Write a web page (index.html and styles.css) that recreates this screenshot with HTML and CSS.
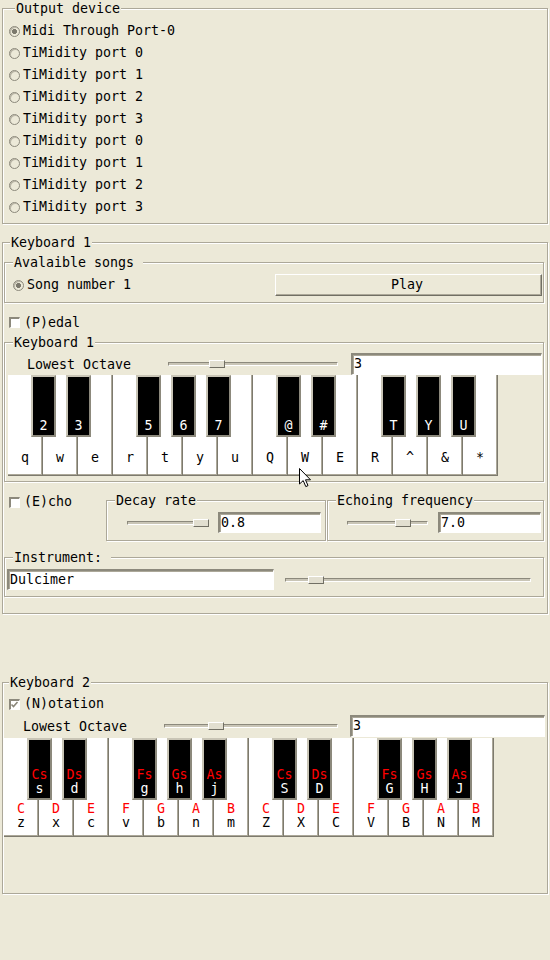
FILE: index.html
```html
<!DOCTYPE html>
<html>
<head>
<meta charset="utf-8">
<title>Keyboard</title>
<link rel="stylesheet" href="styles.css">
</head>
<body>
<fieldset class="lf lf-outer out">
  <legend>Output device</legend>
  <div class="radios">
    <div class="radio on"><span class="rb"></span>Midi Through Port-0</div>
    <div class="radio"><span class="rb"></span>TiMidity port 0</div>
    <div class="radio"><span class="rb"></span>TiMidity port 1</div>
    <div class="radio"><span class="rb"></span>TiMidity port 2</div>
    <div class="radio"><span class="rb"></span>TiMidity port 3</div>
    <div class="radio"><span class="rb"></span>TiMidity port 0</div>
    <div class="radio"><span class="rb"></span>TiMidity port 1</div>
    <div class="radio"><span class="rb"></span>TiMidity port 2</div>
    <div class="radio"><span class="rb"></span>TiMidity port 3</div>
  </div>
</fieldset>

<fieldset class="lf lf-outer kb1">
  <legend>Keyboard 1</legend>
  <fieldset class="lf lf-inner songs">
    <legend>Avalaible songs&nbsp;</legend>
    <div class="songs-row">
      <div class="radio on"><span class="rb"></span>Song number 1</div>
      <div class="btn">Play</div>
    </div>
  </fieldset>

  <div class="check pedal"><span class="cb"></span>(P)edal</div>

  <fieldset class="lf lf-inner kbin">
    <legend>Keyboard 1</legend>
    <div class="oct-row oct1">
      <span class="oct-label">Lowest Octave</span>
      <div class="scale"><span class="handle" style="left:40px"></span></div>
      <div class="entry">3</div>
    </div>
    <div class="piano p1">
      <div class="wk"><span>q</span><div class="bk"><span>2</span></div></div>
      <div class="wk"><span>w</span><div class="bk"><span>3</span></div></div>
      <div class="wk"><span>e</span></div>
      <div class="wk"><span>r</span><div class="bk"><span>5</span></div></div>
      <div class="wk"><span>t</span><div class="bk"><span>6</span></div></div>
      <div class="wk"><span>y</span><div class="bk"><span>7</span></div></div>
      <div class="wk"><span>u</span></div>
      <div class="wk"><span>Q</span><div class="bk"><span>@</span></div></div>
      <div class="wk"><span>W</span><div class="bk"><span>#</span></div></div>
      <div class="wk"><span>E</span></div>
      <div class="wk"><span>R</span><div class="bk"><span>T</span></div></div>
      <div class="wk"><span>^</span><div class="bk"><span>Y</span></div></div>
      <div class="wk"><span>&amp;</span><div class="bk"><span>U</span></div></div>
      <div class="wk"><span>*</span></div>
    </div>
  </fieldset>

  <div class="echo-row">
    <div class="check echo"><span class="cb"></span>(E)cho</div>
    <fieldset class="lf lf-inner decay">
      <legend>Decay rate</legend>
      <div class="val-row">
        <div class="scale"><span class="handle" style="left:65px"></span></div>
        <div class="entry">0.8</div>
      </div>
    </fieldset>
    <fieldset class="lf lf-inner freq">
      <legend>Echoing frequency</legend>
      <div class="val-row">
        <div class="scale"><span class="handle" style="left:47px"></span></div>
        <div class="entry">7.0</div>
      </div>
    </fieldset>
  </div>

  <fieldset class="lf lf-inner instr">
    <legend>Instrument:&nbsp;</legend>
    <div class="instr-row">
      <div class="entry">Dulcimer</div>
      <div class="scale"><span class="handle" style="left:22px"></span></div>
    </div>
  </fieldset>
</fieldset>

<fieldset class="lf lf-outer kb2">
  <legend>Keyboard 2</legend>
  <div class="check notation on"><span class="cb"><svg width="9" height="9" viewBox="0 0 9 9"><path d="M1.5 4.5 L3.5 6.5 L7.5 2" fill="none" stroke="#8a877a" stroke-width="1.6"/></svg></span>(N)otation</div>
  <div class="oct-row oct2">
    <span class="oct-label">Lowest Octave</span>
    <div class="scale"><span class="handle" style="left:43px"></span></div>
    <div class="entry">3</div>
  </div>
  <div class="piano p2">
    <div class="wk"><b>C</b><span>z</span><div class="bk"><b>Cs</b><span>s</span></div></div>
    <div class="wk"><b>D</b><span>x</span><div class="bk"><b>Ds</b><span>d</span></div></div>
    <div class="wk"><b>E</b><span>c</span></div>
    <div class="wk"><b>F</b><span>v</span><div class="bk"><b>Fs</b><span>g</span></div></div>
    <div class="wk"><b>G</b><span>b</span><div class="bk"><b>Gs</b><span>h</span></div></div>
    <div class="wk"><b>A</b><span>n</span><div class="bk"><b>As</b><span>j</span></div></div>
    <div class="wk"><b>B</b><span>m</span></div>
    <div class="wk"><b>C</b><span>Z</span><div class="bk"><b>Cs</b><span>S</span></div></div>
    <div class="wk"><b>D</b><span>X</span><div class="bk"><b>Ds</b><span>D</span></div></div>
    <div class="wk"><b>E</b><span>C</span></div>
    <div class="wk"><b>F</b><span>V</span><div class="bk"><b>Fs</b><span>G</span></div></div>
    <div class="wk"><b>G</b><span>B</span><div class="bk"><b>Gs</b><span>H</span></div></div>
    <div class="wk"><b>A</b><span>N</span><div class="bk"><b>As</b><span>J</span></div></div>
    <div class="wk"><b>B</b><span>M</span></div>
  </div>
</fieldset>

<svg class="cursor" width="13" height="20" viewBox="0 0 13 20"><path d="M0.5 0.5 L0.5 16 L4.2 12.6 L6.8 18.6 L9 17.6 L6.5 11.8 L11.5 11.8 Z" fill="#fff" stroke="#000" stroke-width="1" stroke-linejoin="round"/></svg>
</body>
</html>
```

FILE: styles.css
```css
* { box-sizing: border-box; }
html, body { margin: 0; padding: 0; }
body {
  position: relative;
  width: 550px;
  height: 960px;
  overflow: hidden;
  padding: 0 2px;
  background: #ece9d8;
  color: #000;
  font-family: "DejaVu Sans Mono", "Liberation Mono", monospace;
  font-size: 13.3px;
  line-height: 16px;
}

/* label frames */
.lf {
  margin: 0;
  padding: 0;
  min-width: 0;
  border: 1px solid #aca899;
  box-shadow: 1px 1px 0 #fff, inset 1px 1px 0 #fff;
}
.lf > legend {
  padding: 0 1px;
  height: 17px;
  line-height: 17px;
  background: #ece9d8;
}
.lf-outer > legend { margin-left: 6px; }
.lf-inner > legend { margin-left: 8px; }

/* output device */
.out { padding: 3px 0 5px 6px; }
.radio {
  display: flex;
  align-items: center;
  height: 22px;
  line-height: 22px;
  white-space: pre;
}
.rb {
  width: 11px;
  height: 11px;
  margin-right: 3px;
  border-radius: 50%;
  border: 1px solid #8c897c;
  background: #ece9d8;
  box-shadow: inset 1px 1px 0 #b9b5a6;
  flex: none;
}
.radio.on .rb {
  background: radial-gradient(circle, #7b786c 0 2.2px, #ece9d8 2.8px);
}

/* keyboard 1 */
.kb1 { margin-top: 10px; padding: 0 3px 16px 1px; }
.songs { margin-top: 3px; }
.songs-row {
  display: flex;
  align-items: center;
  justify-content: space-between;
  padding: 3px 1px 6px 8px;
}
.btn {
  width: 267px;
  height: 22px;
  line-height: 19px;
  text-align: center;
  padding-right: 3px;
  border-top: 1px solid #fff;
  border-left: 1px solid #fff;
  border-right: 1px solid #716f64;
  border-bottom: 1px solid #716f64;
  box-shadow: inset -1px -1px 0 #aca899;
  background: #ece9d8;
}

.check {
  display: flex;
  align-items: center;
  white-space: pre;
}
.cb {
  width: 11px;
  height: 11px;
  margin-right: 4px;
  flex: none;
  background: #fff;
  border-top: 2px solid #8c897c;
  border-left: 2px solid #8c897c;
  border-right: 1px solid #fff;
  border-bottom: 1px solid #fff;
  display: flex;
  align-items: center;
  justify-content: center;
}
.cb svg { display: block; margin: -1px 0 0 -1px; }
.pedal { margin: 8px 0 0 5px; height: 23px; }

.kbin { padding: 2px 0 5px 0; }

.oct-row { display: flex; align-items: center; height: 22px; }
.oct1 { padding-left: 22px; }
.oct-label { width: 104px; flex: none; white-space: pre; padding-top: 2px; }
.oct1 .scale { margin-left: 37px; width: 170px; }
.oct1 .entry { margin-left: 13px; width: 191px; }

.scale {
  position: relative;
  height: 4px;
  flex: none;
  border-top: 1px solid #8c897c;
  border-left: 1px solid #8c897c;
  border-bottom: 1px solid #fff;
  border-right: 1px solid #fff;
  background: #c9c5b6;
}
.handle {
  position: absolute;
  top: -3px;
  width: 16px;
  height: 8px;
  background: #e2dfd0;
  border-top: 1px solid #fff;
  border-left: 1px solid #fff;
  border-right: 1px solid #716f64;
  border-bottom: 1px solid #716f64;
}

.entry {
  height: 22px;
  flex: none;
  line-height: 18px;
  padding-left: 1px;
  background: #fff;
  border-top: 2px solid #8c897c;
  border-left: 2px solid #8c897c;
  border-right: 1px solid #fff;
  border-bottom: 1px solid #fff;
  box-shadow: inset 1px 1px 0 #aca899;
  white-space: pre;
  overflow: hidden;
}

/* pianos */
.piano { display: flex; }
.p1 { margin-left: 3px; }
.p2 { margin-left: 1px; margin-top: 1px; }
.wk {
  position: relative;
  width: 35px;
  flex: none;
  background: #fff;
  border-right: 1px solid #7d7a6e;
  border-bottom: 1px solid #7d7a6e;
  box-shadow: inset -1px -1px 0 #aca899;
  display: flex;
  flex-direction: column;
  align-items: center;
  justify-content: flex-end;
  line-height: 14px;
}
.p1 .wk { height: 101px; padding-bottom: 10px; }
.p2 .wk { height: 99px; padding-bottom: 6px; }
.wk b, .bk b { font-weight: normal; color: #ff0000; }
.bk {
  position: absolute;
  z-index: 1;
  top: 0;
  left: 23px;
  width: 25px;
  height: 62px;
  background: #000;
  color: #fff;
  border-top: 2px solid #c9c5b6;
  border-left: 2px solid #c9c5b6;
  border-right: 2px solid #8c897c;
  border-bottom: 2px solid #8c897c;
  display: flex;
  flex-direction: column;
  align-items: center;
  justify-content: flex-end;
  line-height: 14px;
}
.p1 .bk { padding-bottom: 2px; }
.p2 .bk { padding-bottom: 2px; }

/* echo row */
.echo-row { display: flex; align-items: flex-start; margin-top: 10px; }
.echo { width: 102px; flex: none; padding-left: 5px; height: 20px; }
.decay { width: 220px; flex: none; }
.freq { width: 217px; flex: none; margin-left: 1px; }
.val-row { display: flex; align-items: center; padding: 3px 0 7px 0; }
.decay .val-row { padding-left: 20px; }
.freq .val-row { padding-left: 19px; }
.val-row .scale { width: 81px; }
.val-row .entry { margin-left: 10px; width: 103px; height: 21px; line-height: 17px; }

.instr { margin-top: 8px; }
.instr-row { display: flex; align-items: center; padding: 3px 0 6px 2px; }
.instr-row .entry { width: 267px; height: 21px; line-height: 17px; }
.instr-row .scale { margin-left: 11px; width: 246px; }

/* keyboard 2 */
.kb2 { margin-top: 60px; padding: 0 0 56px 0; }
.notation { height: 22px; margin: 2px 0 0 6px; }
.oct2 { padding-left: 20px; }
.oct2 .scale { margin-left: 37px; width: 174px; }
.oct2 .entry { margin-left: 12px; width: 195px; }

.cursor { position: absolute; left: 299px; top: 468px; }
```
